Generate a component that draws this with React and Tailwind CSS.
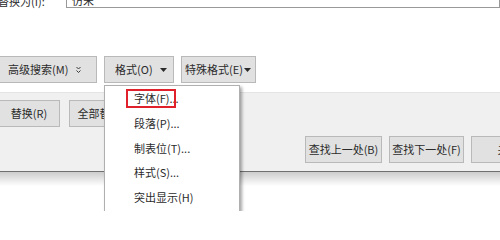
const font = { fontFamily: '"Noto Sans CJK SC", "Noto Sans", sans-serif' };

const DownTri = () => (
  <svg width="7" height="4" viewBox="0 0 7 4" className="ml-auto shrink-0">
    <path d="M0 0 L7 0 L3.5 4 Z" fill="#2b2b2b" />
  </svg>
);

const DoubleChevron = () => (
  <svg width="5" height="8" viewBox="0 0 5 8" className="shrink-0">
    <path d="M0.5 1 L2.5 3 L4.5 1 M0.5 4.5 L2.5 6.5 L4.5 4.5" fill="none" stroke="#3a3a3a" strokeWidth="1" />
  </svg>
);

const Btn = ({ className = "", children }) => (
  <div
    className={`flex h-[27px] shrink-0 items-center border border-[#b9b9b9] bg-[#e1e1e1] text-[11px] text-[#2b2b2b] ${className}`}
  >
    {children}
  </div>
);

const menuItems = ["字体(F)...", "段落(P)...", "制表位(T)...", "样式(S)...", "突出显示(H)"];

export default function App() {
  return (
    <div className="relative h-[211px] w-[500px] overflow-hidden bg-white" style={font}>
      {/* replace-with row, cut at the top */}
      <div className="-mt-[12px] flex h-[20px] items-center">
        <span className="-ml-[2px] w-[68px] shrink-0 pt-[6px] text-[11px] text-[#2b2b2b]">替换为(I):</span>
        <div className="flex h-[20px] flex-1 items-center border border-[#999999] bg-white pl-[5px] pt-[5px] text-[11px] text-[#2b2b2b]">
          仿宋
        </div>
      </div>

      {/* search options buttons */}
      <div className="mt-[48px] flex gap-[7px]">
        <Btn className="-ml-[10px] w-[107px] gap-[8px] pl-[17px]">
          <span>高级搜索(M)</span>
          <DoubleChevron />
        </Btn>
        <Btn className="w-[70px] border-[#6e6e6e] bg-[#dadada] pr-[6px] pl-[10px]">
          <span>格式(O)</span>
          <DownTri />
        </Btn>
        <Btn className="w-[75px] pr-[4px] pl-[3px]">
          <span>特殊格式(E)</span>
          <DownTri />
        </Btn>
      </div>

      {/* bottom gray panel */}
      <div className="mt-[9px] border-t border-b border-t-[#e4e4e4] border-b-[#707070] bg-[#f0f0f0] pt-[7px] pb-[8px]">
        <div className="flex gap-[9px]">
          <Btn className="-ml-[2px] w-[62px] justify-center">替换(R)</Btn>
          <Btn className="w-[75px] justify-center">全部替换(A)</Btn>
        </div>
        <div className="mt-[9px] flex gap-[7px] pl-[305px]">
          <Btn className="w-[77px] justify-center">查找上一处(B)</Btn>
          <Btn className="w-[75px] justify-center">查找下一处(F)</Btn>
          <Btn className="w-[75px] justify-center">关闭</Btn>
        </div>
      </div>
      <div className="h-[14px] bg-gradient-to-b from-[#cdcdcd] to-white" />

      {/* format dropdown menu */}
      <div className="absolute top-[85px] left-[104px] w-[136px] border border-[#b0b0b0] bg-white pb-[20px] shadow-[2px_2px_3px_rgba(0,0,0,0.35)]">
        {menuItems.map((item, i) => (
          <div key={item} className="relative flex h-[24.75px] items-center pl-[29px] text-[11px] text-[#2b2b2b]">
            {item}
            {i === 0 && (
              <div className="absolute top-[3px] left-[21px] h-[19px] w-[50px] border-2 border-[#e0202a]" />
            )}
          </div>
        ))}
      </div>
    </div>
  );
}
